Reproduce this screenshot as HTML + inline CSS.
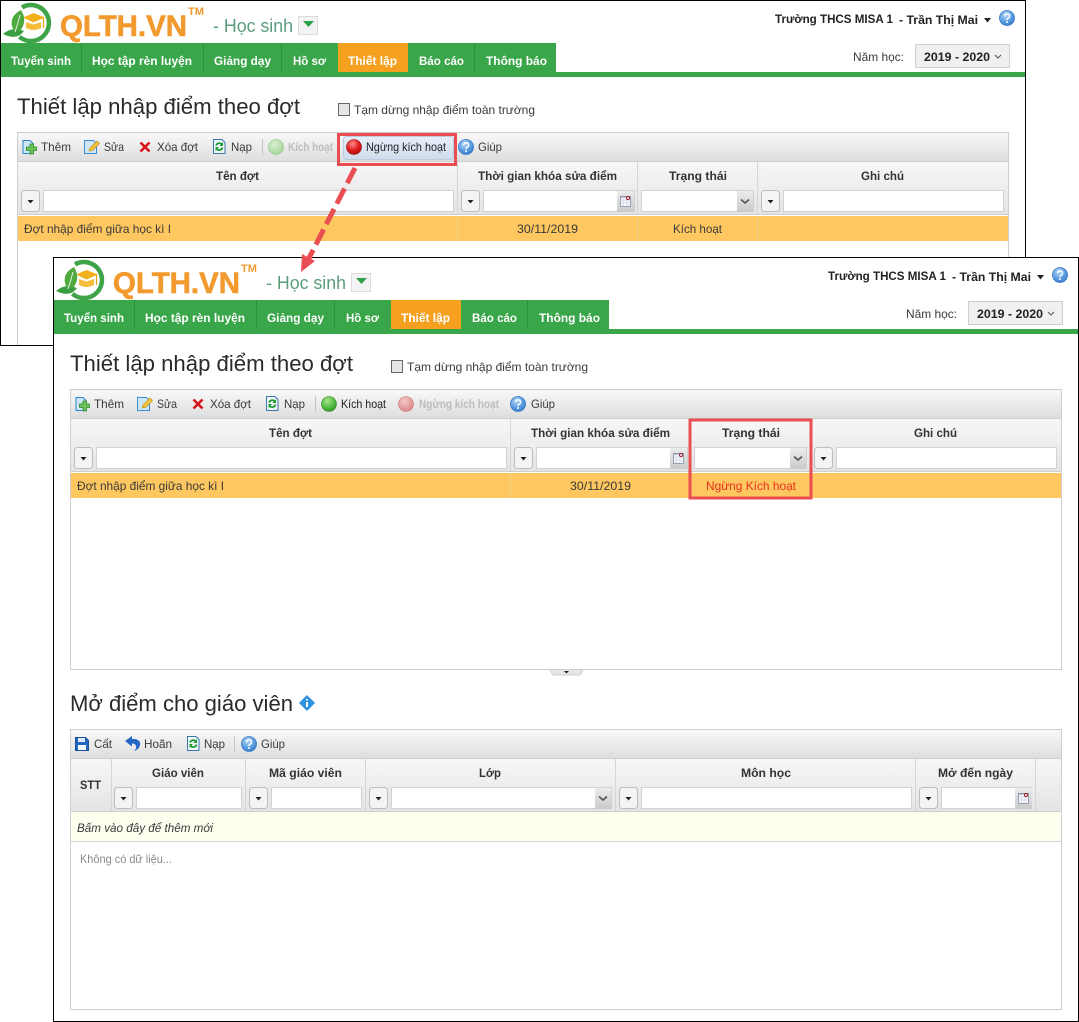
<!DOCTYPE html>
<html lang="vi"><head><meta charset="utf-8"><title>Thiết lập nhập điểm theo đợt</title>
<style>
html,body{margin:0;padding:0;background:#fff}
svg{display:block}
text{font-family:"Liberation Sans",sans-serif;font-size:12px;fill:#3a3a3a}
.b{font-weight:bold;fill:#333}
.n{font-weight:bold;fill:#fff}
.d{fill:#bdbdbd;font-weight:bold}
.h{font-size:22px;fill:#2a2a2a}
.q{font-size:30px;font-weight:bold;fill:#f29a2e;stroke:#f29a2e;stroke-width:.6}
.s{font-size:18px;fill:#5b9c7c}
.y{font-weight:bold;fill:#222}
</style></head><body>
<svg xmlns="http://www.w3.org/2000/svg" width="1079" height="1022" viewBox="0 0 1079 1022">
<defs>
<linearGradient id="tb" x1="0" y1="0" x2="0" y2="1"><stop offset="0" stop-color="#f8f8f8"/><stop offset="1" stop-color="#dedede"/></linearGradient>
<linearGradient id="hd" x1="0" y1="0" x2="0" y2="1"><stop offset="0" stop-color="#f7f7f7"/><stop offset="1" stop-color="#e4e4e4"/></linearGradient>
<linearGradient id="hov" x1="0" y1="0" x2="0" y2="1"><stop offset="0" stop-color="#e6eef8"/><stop offset="1" stop-color="#cfdcec"/></linearGradient>
<linearGradient id="arr" x1="0" y1="0" x2="0" y2="1"><stop offset="0" stop-color="#ececec"/><stop offset="1" stop-color="#cacaca"/></linearGradient>
<radialGradient id="gb" cx=".4" cy=".3" r=".8"><stop offset="0" stop-color="#a8e58c"/><stop offset=".6" stop-color="#4cb83a"/><stop offset="1" stop-color="#2d8a22"/></radialGradient>
<radialGradient id="gd" cx=".4" cy=".3" r=".8"><stop offset="0" stop-color="#d8efd0"/><stop offset="1" stop-color="#9fd494"/></radialGradient>
<radialGradient id="rb" cx=".4" cy=".3" r=".8"><stop offset="0" stop-color="#ff8a8a"/><stop offset=".55" stop-color="#e01a1a"/><stop offset="1" stop-color="#9c0d0d"/></radialGradient>
<radialGradient id="rd" cx=".4" cy=".3" r=".8"><stop offset="0" stop-color="#f4c8c8"/><stop offset="1" stop-color="#d97f7f"/></radialGradient>
<radialGradient id="bl" cx=".4" cy=".3" r=".8"><stop offset="0" stop-color="#b4d8f7"/><stop offset=".6" stop-color="#559ae0"/><stop offset="1" stop-color="#3573c0"/></radialGradient>

<g id="fb"><rect x=".5" y=".5" width="18" height="21" rx="3" fill="#f4f4f4" stroke="#bdbdbd"/><path d="M6.500 10h6l-3 3.500z" fill="#222"/></g>
<g id="date"><rect width="17" height="21" fill="url(#arr)"/><rect x="3.500" y="5.500" width="10" height="10" fill="#f4f6fa" stroke="#98a2b0"/><path d="M3 5h11v1.500H3z" fill="#8b97a8"/><path d="M6.500 6v9M10 6v9M4 9h9M4 12h9" stroke="#d3d9e2" stroke-width=".7"/><circle cx="11" cy="7" r="1.500" fill="#fff" stroke="#a01020" stroke-width=".9"/></g>
<g id="cmb"><rect width="16" height="21" fill="url(#arr)"/><path d="M4 8.500l4 3.500 4-3.500" fill="none" stroke="#555" stroke-width="1.600"/></g>

<g id="add"><path d="M2.500.5h7l3 3v10h-10z" fill="#cde6f9" stroke="#2f86c8"/><path d="M6 7h3.500V4H13v3h3v3.500h-3V14H9.500v-3.500H6z" fill="#6cc35a" stroke="#2c8a2a" stroke-width=".8"/></g>
<g id="edit"><path d="M.5 1.500h9l3 3v10H.5z" fill="#cfe6f8" stroke="#3d8ed0"/><path d="M5 12l1-3 7-7 2.500 2.500-7 7z" fill="#f2c33c" stroke="#c49420" stroke-width=".7"/></g>
<path id="x" d="M1.500 1.500l9 9M10.500 1.500l-9 9" stroke="#d8151b" stroke-width="2.600" fill="none"/>
<g id="rel"><path d="M.5.500h8.500l3 3v11H.5z" fill="#eef5fb" stroke="#3a78a8"/><path d="M3 6.500A3.500 3.500 0 0 1 9 5.500M9.500 8.500A3.500 3.500 0 0 1 3.500 10" fill="none" stroke="#1c9a2c" stroke-width="1.700"/><path d="M10 3v4H6.500zM2.500 12V8H6z" fill="#1c9a2c"/></g>
<g id="help"><circle r="7.500" fill="url(#bl)" stroke="#3a78c4" stroke-width=".8"/><path d="M-2.400-1.900A2.500 2.300 0 1 1 .9.300C.2.800 0 1 0 2" fill="none" stroke="#fff" stroke-width="1.500"/><circle cy="4" r="1" fill="#fff"/></g>
<g id="tri"><path d="M0 0h7l-3.500 4.500z" fill="#222"/></g>

<g id="logo">
<path d="M22 7.400A18 18 0 1 1 19.400 36.800" fill="none" stroke="#3da447" stroke-width="4.500"/>
<path d="M23 17.500L33.500 13 45 17.500 33.500 22.500z" fill="#f2b01d"/>
<path d="M26 22l7.500 2.500 7.500-2.500v6q-7.500 4-15 0z" fill="#f5bd3c"/>
<path d="M43.500 18v10" stroke="#e3a21a" stroke-width="1.200"/>
<path d="M3 34Q12 26 24 31 17 41 3 34z" fill="#3b9e41"/>
<path d="M13 29Q8 17 21 10 28 21 20 31z" fill="#4eaa3f"/>
<path d="M15 32q3-9 5-17" stroke="#fff" stroke-width=".8" fill="none"/>
</g>
<g id="navbg">
<rect x="1" y="43" width="555" height="29" fill="#3aa64a"/>
<rect x="338" y="43" width="70" height="29" fill="#f5a01e"/>
<path d="M81.500 43v29M203.500 43v29M281.500 43v29M474.500 43v29" stroke="#2d8f3c"/>
<rect x="1" y="72" width="1024" height="5" fill="#3aa64a"/>
</g>
<g id="skel">
<rect x="18" y="133" width="990" height="28" fill="url(#tb)"/>
<rect x="18" y="162" width="990" height="52" fill="url(#hd)"/>
<path d="M18 161.500h990" stroke="#cfcfcf"/>
<path d="M18 214.500h990" stroke="#cfcfcf"/>
<path d="M457.500 162v52M637.500 162v52M757.500 162v52" stroke="#d6d6d6"/>
<use href="#fb" x="21" y="190"/><rect x="43.500" y="190.500" width="410" height="21" fill="#fff" stroke="#d2d2d2"/>
<use href="#fb" x="461" y="190"/><rect x="483.500" y="190.500" width="151" height="21" fill="#fff" stroke="#d2d2d2"/><use href="#date" x="617" y="191"/>
<rect x="641.500" y="190.500" width="112" height="21" fill="#fff" stroke="#d2d2d2"/><use href="#cmb" x="737" y="191"/>
<use href="#fb" x="761" y="190"/><rect x="783.500" y="190.500" width="220" height="21" fill="#fff" stroke="#d2d2d2"/>
<rect x="18" y="216" width="990" height="25" fill="#fec75f"/>
<path d="M457.500 216v25M637.500 216v25M757.500 216v25" stroke="#f3cf8d"/>
<use href="#add" x="20.500" y="140"/><use href="#edit" x="84" y="139"/><use href="#x" x="139" y="141"/><use href="#rel" x="213" y="139"/>
<path d="M262.500 139v16" stroke="#c4c4c4"/>
</g>
</defs>

<rect width="1079" height="1022" fill="#fff"/>

<!-- Window 1 -->
<rect x=".5" y=".5" width="1025" height="345" fill="#fff" stroke="#000"/>
<use href="#logo"/>
<text class="q" x="60" y="36" textLength="127" lengthAdjust="spacingAndGlyphs">QLTH.VN</text>
<text x="188" y="15" textLength="16" lengthAdjust="spacingAndGlyphs" style="font-size:11px;font-weight:bold;fill:#f29a2e">TM</text>
<text class="s" x="213" y="32" textLength="80" lengthAdjust="spacingAndGlyphs">- Học sinh</text>
<rect x="298.500" y="16.500" width="19" height="18" fill="#f3f3f3" stroke="#dcdcdc"/><path d="M303 21h11l-5.500 6z" fill="#2fa04a"/>
<text class="b" x="775" y="23" textLength="118" lengthAdjust="spacingAndGlyphs" style="fill:#222">Trường THCS MISA 1</text>
<text class="b" x="899" y="24" textLength="79" lengthAdjust="spacingAndGlyphs" style="fill:#222">- Trần Thị Mai</text>
<use href="#tri" x="984" y="18"/><use href="#help" x="1007" y="18"/>
<use href="#navbg"/>
<text class="n" x="11" y="65" textLength="60" lengthAdjust="spacingAndGlyphs">Tuyển sinh</text>
<text class="n" x="92" y="65" textLength="100" lengthAdjust="spacingAndGlyphs">Học tập rèn luyện</text>
<text class="n" x="214" y="65" textLength="57" lengthAdjust="spacingAndGlyphs">Giảng dạy</text>
<text class="n" x="293" y="65" textLength="33" lengthAdjust="spacingAndGlyphs">Hồ sơ</text>
<text class="n" x="348" y="65" textLength="49" lengthAdjust="spacingAndGlyphs">Thiết lập</text>
<text class="n" x="419" y="65" textLength="45" lengthAdjust="spacingAndGlyphs">Báo cáo</text>
<text class="n" x="486" y="65" textLength="61" lengthAdjust="spacingAndGlyphs">Thông báo</text>
<text x="853" y="61" textLength="51" lengthAdjust="spacingAndGlyphs">Năm học:</text>
<rect x="915.500" y="44.500" width="94" height="23" fill="#f0f0f0" stroke="#cfcfcf"/>
<text class="y" x="924" y="61" textLength="66" lengthAdjust="spacingAndGlyphs">2019 - 2020</text>
<path d="M995 55l3 3 3-3" fill="none" stroke="#555"/>
<text class="h" x="17" y="114" textLength="283" lengthAdjust="spacingAndGlyphs">Thiết lập nhập điểm theo đợt</text>
<rect x="338.500" y="103.500" width="11" height="12" fill="#e6e6e6" stroke="#666"/>
<text x="354" y="114" textLength="181" lengthAdjust="spacingAndGlyphs">Tạm dừng nhập điểm toàn trường</text>
<path d="M17.500 345V132.500h991V345" fill="#fff" stroke="#cfcfcf"/>
<use href="#skel"/>
<text x="41" y="151" textLength="30" lengthAdjust="spacingAndGlyphs">Thêm</text>
<text x="104" y="151" textLength="20" lengthAdjust="spacingAndGlyphs">Sửa</text>
<text x="157" y="151" textLength="41" lengthAdjust="spacingAndGlyphs">Xóa đợt</text>
<text x="231" y="151" textLength="21" lengthAdjust="spacingAndGlyphs">Nạp</text>
<circle cx="276" cy="147" r="7.500" fill="url(#gd)" stroke="#8fc482" stroke-width=".6"/>
<text class="d" x="288" y="151" textLength="45" lengthAdjust="spacingAndGlyphs">Kích hoạt</text>
<rect x="343.500" y="136.500" width="110" height="23" rx="3" fill="url(#hov)" stroke="#bccbe0"/>
<circle cx="354" cy="147" r="7.500" fill="url(#rb)" stroke="#8a0b0b" stroke-width=".6"/>
<text x="366" y="151" textLength="80" lengthAdjust="spacingAndGlyphs" style="fill:#222">Ngừng kích hoạt</text>
<rect x="338.500" y="134.500" width="117" height="30" fill="none" stroke="#e94f52" stroke-width="3"/>
<use href="#help" x="466" y="147"/>
<text x="478" y="151" textLength="24" lengthAdjust="spacingAndGlyphs">Giúp</text>
<text class="b" x="216" y="180" textLength="43" lengthAdjust="spacingAndGlyphs">Tên đợt</text>
<text class="b" x="478" y="180" textLength="139" lengthAdjust="spacingAndGlyphs">Thời gian khóa sửa điểm</text>
<text class="b" x="669" y="180" textLength="58" lengthAdjust="spacingAndGlyphs">Trạng thái</text>
<text class="b" x="861" y="180" textLength="43" lengthAdjust="spacingAndGlyphs">Ghi chú</text>
<text x="24" y="233" textLength="147" lengthAdjust="spacingAndGlyphs">Đợt nhập điểm giữa học kì I</text>
<text x="517" y="233" textLength="61" lengthAdjust="spacingAndGlyphs">30/11/2019</text>
<text x="673" y="233" textLength="49" lengthAdjust="spacingAndGlyphs">Kích hoạt</text>

<!-- Window 2 -->
<rect x="53.500" y="257.500" width="1025" height="764" fill="#fff" stroke="#000"/>
<g transform="translate(53,257)">
<use href="#logo"/>
<text class="q" x="60" y="36" textLength="127" lengthAdjust="spacingAndGlyphs">QLTH.VN</text>
<text x="188" y="15" textLength="16" lengthAdjust="spacingAndGlyphs" style="font-size:11px;font-weight:bold;fill:#f29a2e">TM</text>
<text class="s" x="213" y="32" textLength="80" lengthAdjust="spacingAndGlyphs">- Học sinh</text>
<rect x="298.500" y="16.500" width="19" height="18" fill="#f3f3f3" stroke="#dcdcdc"/><path d="M303 21h11l-5.500 6z" fill="#2fa04a"/>
<text class="b" x="775" y="23" textLength="118" lengthAdjust="spacingAndGlyphs" style="fill:#222">Trường THCS MISA 1</text>
<text class="b" x="899" y="24" textLength="79" lengthAdjust="spacingAndGlyphs" style="fill:#222">- Trần Thị Mai</text>
<use href="#tri" x="984" y="18"/><use href="#help" x="1007" y="18"/>
<use href="#navbg"/>
<text class="n" x="11" y="65" textLength="60" lengthAdjust="spacingAndGlyphs">Tuyển sinh</text>
<text class="n" x="92" y="65" textLength="100" lengthAdjust="spacingAndGlyphs">Học tập rèn luyện</text>
<text class="n" x="214" y="65" textLength="57" lengthAdjust="spacingAndGlyphs">Giảng dạy</text>
<text class="n" x="293" y="65" textLength="33" lengthAdjust="spacingAndGlyphs">Hồ sơ</text>
<text class="n" x="348" y="65" textLength="49" lengthAdjust="spacingAndGlyphs">Thiết lập</text>
<text class="n" x="419" y="65" textLength="45" lengthAdjust="spacingAndGlyphs">Báo cáo</text>
<text class="n" x="486" y="65" textLength="61" lengthAdjust="spacingAndGlyphs">Thông báo</text>
<text x="853" y="61" textLength="51" lengthAdjust="spacingAndGlyphs">Năm học:</text>
<rect x="915.500" y="44.500" width="94" height="23" fill="#f0f0f0" stroke="#cfcfcf"/>
<text class="y" x="924" y="61" textLength="66" lengthAdjust="spacingAndGlyphs">2019 - 2020</text>
<path d="M995 55l3 3 3-3" fill="none" stroke="#555"/>
<text class="h" x="17" y="114" textLength="283" lengthAdjust="spacingAndGlyphs">Thiết lập nhập điểm theo đợt</text>
<rect x="338.500" y="103.500" width="11" height="12" fill="#e6e6e6" stroke="#666"/>
<text x="354" y="114" textLength="181" lengthAdjust="spacingAndGlyphs">Tạm dừng nhập điểm toàn trường</text>
<rect x="17.500" y="132.500" width="991" height="280" fill="#fff" stroke="#cfcfcf"/>
<use href="#skel"/>
<text x="41" y="151" textLength="30" lengthAdjust="spacingAndGlyphs">Thêm</text>
<text x="104" y="151" textLength="20" lengthAdjust="spacingAndGlyphs">Sửa</text>
<text x="157" y="151" textLength="41" lengthAdjust="spacingAndGlyphs">Xóa đợt</text>
<text x="231" y="151" textLength="21" lengthAdjust="spacingAndGlyphs">Nạp</text>
<circle cx="276" cy="147" r="7.500" fill="url(#gb)" stroke="#2d8a22" stroke-width=".6"/>
<text x="288" y="151" textLength="45" lengthAdjust="spacingAndGlyphs" style="fill:#222">Kích hoạt</text>
<circle cx="353" cy="147" r="7.500" fill="url(#rd)" stroke="#c87878" stroke-width=".6"/>
<text class="d" x="366" y="151" textLength="80" lengthAdjust="spacingAndGlyphs">Ngừng kích hoạt</text>
<use href="#help" x="465" y="147"/>
<text x="478" y="151" textLength="24" lengthAdjust="spacingAndGlyphs">Giúp</text>
<text class="b" x="216" y="180" textLength="43" lengthAdjust="spacingAndGlyphs">Tên đợt</text>
<text class="b" x="478" y="180" textLength="139" lengthAdjust="spacingAndGlyphs">Thời gian khóa sửa điểm</text>
<text class="b" x="669" y="180" textLength="58" lengthAdjust="spacingAndGlyphs">Trạng thái</text>
<text class="b" x="861" y="180" textLength="43" lengthAdjust="spacingAndGlyphs">Ghi chú</text>
<text x="24" y="233" textLength="147" lengthAdjust="spacingAndGlyphs">Đợt nhập điểm giữa học kì I</text>
<text x="517" y="233" textLength="61" lengthAdjust="spacingAndGlyphs">30/11/2019</text>
<text x="653" y="233" textLength="90" lengthAdjust="spacingAndGlyphs" style="fill:#e8301f">Ngừng Kích hoạt</text>
</g>
<rect x="690" y="420" width="121" height="78" fill="none" stroke="#e94f52" stroke-width="3"/>

<!-- collapse tab -->
<path d="M550 669.500h33l-3 5.500h-27z" fill="#e6e6e6" stroke="#cfcfcf"/><path d="M564 671h5l-2.500 2.500z" fill="#222"/>

<!-- Section 2 -->
<text class="h" x="70" y="711" textLength="223" lengthAdjust="spacingAndGlyphs">Mở điểm cho giáo viên</text>
<path d="M307 695l8 8-8 8-8-8z" fill="#2f93e0"/><path d="M306 699h2v1.500h-2zM306 702h2v5h-2z" fill="#fff"/>
<rect x="70.500" y="729.500" width="991" height="280" fill="#fff" stroke="#cfcfcf"/>
<rect x="71" y="730" width="990" height="28" fill="url(#tb)"/>
<rect x="71" y="759" width="990" height="52" fill="url(#hd)"/>
<path d="M71 758.500h990M71 811.500h990" stroke="#cfcfcf"/>
<path d="M111.500 759v52M245.500 759v52M365.500 759v52M615.500 759v52M915.500 759v52M1035.500 759v52" stroke="#d6d6d6"/>
<path d="M75.500 737.500h10l3 3v10h-13z" fill="#2468c0" stroke="#1a4f9a"/><rect x="78" y="738" width="7" height="4" fill="#dfeafa"/><rect x="78" y="745" width="8" height="5" fill="#f4f7fc"/>
<path d="M125 741l7-5v3c5-.5 9 2 8 6-.5 3-3 5-6 6 2-2 3-4 1.500-6-1-1.500-2-1.500-3.500-1.500v3z" fill="#2467c4"/>
<use href="#rel" x="187" y="736"/>
<path d="M234.500 736v16" stroke="#c4c4c4"/>
<use href="#help" x="249" y="744"/>
<text x="94" y="748" textLength="18" lengthAdjust="spacingAndGlyphs">Cất</text>
<text x="144" y="748" textLength="28" lengthAdjust="spacingAndGlyphs">Hoãn</text>
<text x="204" y="748" textLength="21" lengthAdjust="spacingAndGlyphs">Nạp</text>
<text x="261" y="748" textLength="24" lengthAdjust="spacingAndGlyphs">Giúp</text>
<text class="b" x="80" y="789" textLength="21" lengthAdjust="spacingAndGlyphs">STT</text>
<text class="b" x="152" y="777" textLength="52" lengthAdjust="spacingAndGlyphs">Giáo viên</text>
<text class="b" x="269" y="777" textLength="73" lengthAdjust="spacingAndGlyphs">Mã giáo viên</text>
<text class="b" x="479" y="777" textLength="22" lengthAdjust="spacingAndGlyphs">Lớp</text>
<text class="b" x="741" y="777" textLength="50" lengthAdjust="spacingAndGlyphs">Môn học</text>
<text class="b" x="938" y="777" textLength="75" lengthAdjust="spacingAndGlyphs">Mở đến ngày</text>
<use href="#fb" x="114" y="787"/><rect x="136.500" y="787.500" width="105" height="21" fill="#fff" stroke="#d2d2d2"/>
<use href="#fb" x="249" y="787"/><rect x="271.500" y="787.500" width="90" height="21" fill="#fff" stroke="#d2d2d2"/>
<use href="#fb" x="369" y="787"/><rect x="391.500" y="787.500" width="220" height="21" fill="#fff" stroke="#d2d2d2"/><use href="#cmb" x="595" y="788"/>
<use href="#fb" x="619" y="787"/><rect x="641.500" y="787.500" width="270" height="21" fill="#fff" stroke="#d2d2d2"/>
<use href="#fb" x="919" y="787"/><rect x="941.500" y="787.500" width="90" height="21" fill="#fff" stroke="#d2d2d2"/><use href="#date" x="1015" y="788"/>
<rect x="71" y="812" width="990" height="29" fill="#fffff0"/>
<path d="M71 841.500h990" stroke="#d4d4d4"/>
<text x="77" y="832" textLength="136" lengthAdjust="spacingAndGlyphs" style="font-style:italic">Bấm vào đây để thêm mới</text>
<text x="80" y="863" textLength="92" lengthAdjust="spacingAndGlyphs" style="fill:#8a8a8a">Không có dữ liệu...</text>

<!-- Arrow -->
<path d="M355 168L308 260" fill="none" stroke="#e94f52" stroke-width="5" stroke-dasharray="17 6"/>
<path d="M301 272L302 254 315 261z" fill="#e94f52"/>
</svg>
</body></html>
